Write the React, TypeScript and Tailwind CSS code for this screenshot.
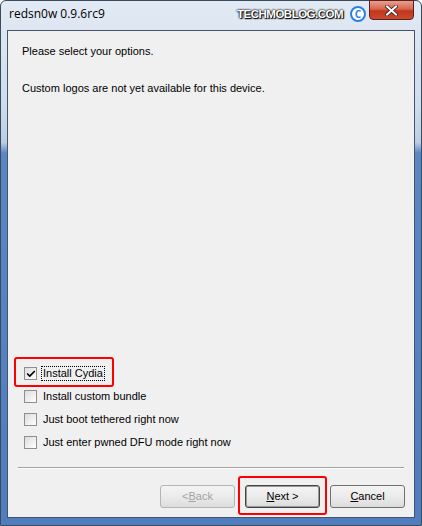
import { Check } from 'lucide-react';

const ui = { fontFamily: '"Liberation Sans", Arial, sans-serif' };
const titleFont = { fontFamily: '"Open Sans", "Noto Sans", sans-serif' };

function Option({ label, checked, focused }: { label: string; checked?: boolean; focused?: boolean }) {
  return (
    <div className="flex h-[23px] items-center gap-[4px]">
      <span className="flex h-[13px] w-[13px] items-center justify-center border border-[#8f8f8f] bg-gradient-to-br from-[#dcdcdc] to-white">
        {checked && <Check className="h-[10px] w-[10px] text-black" strokeWidth={4} />}
      </span>
      <span className={focused ? 'border border-dotted border-black px-[1px] leading-[13px]' : 'px-[2px]'}>{label}</span>
    </div>
  );
}

function WinButton({ children, disabled, primary }: { children: React.ReactNode; disabled?: boolean; primary?: boolean }) {
  return (
    <div
      className={
        'flex h-[23px] w-[75px] items-center justify-center rounded-[3px] border bg-gradient-to-b from-[#f4f4f4] via-[#ebebeb] to-[#dcdcdc] ' +
        (disabled
          ? 'border-[#b5b5b5] text-[#a3a3a3]'
          : primary
            ? 'border-[#444] shadow-[inset_0_0_0_1px_#9a9a9a] text-black'
            : 'border-[#707070] text-black')
      }
    >
      {children}
    </div>
  );
}

export default function App() {
  return (
    <div className="h-[526px] w-[422px] overflow-hidden bg-white">
      <div className="flex h-full w-full flex-col rounded-t-[6px] border border-[#3b4b5e] bg-[linear-gradient(180deg,#e2eaf4_0%,#cfdcec_20%,#bccde4_27%,#5a86c4_29%,#4f7dbd_100%)]">
        {/* title bar */}
        <div className="relative flex h-[29px] items-center pl-[8px] text-[12px] text-black" style={titleFont}>
          <span className="-mt-[3px]">redsn0w 0.9.6rc9</span>
          <span
            className="absolute left-[236px] top-[5px] text-[11.5px] font-bold tracking-[-0.5px] text-white"
            style={{ fontFamily: '"Liberation Sans", Arial, sans-serif', textShadow: '0 0 2px #000, 0 0 2px #000, 1px 1px 1px #000' }}
          >
            TECHMOBLOG.COM
          </span>
          <span className="absolute left-[349px] top-[5px] flex h-[16px] w-[16px] items-center justify-center rounded-full border-2 border-[#2a7fe0] bg-white text-[10px] font-bold leading-none text-[#2a7fe0]">
            C
          </span>
          <div className="absolute right-[7px] top-[-1px] flex h-[20px] w-[45px] items-center justify-center rounded-b-[4px] border border-[#5a2020] bg-[linear-gradient(180deg,#e9a08e_0%,#d6654f_45%,#c2361c_55%,#c94a30_100%)]">
            <svg width="13" height="11" viewBox="0 0 13 11">
              <path d="M2 1.5 L11 9.5 M11 1.5 L2 9.5" stroke="#3a2020" strokeWidth="3.6" strokeLinecap="square" />
              <path d="M2 1.5 L11 9.5 M11 1.5 L2 9.5" stroke="#ffffff" strokeWidth="2" strokeLinecap="square" />
            </svg>
          </div>
        </div>

        {/* client area */}
        <div className="mx-[6px] mb-[7px] flex flex-1 flex-col border border-[#44546a] bg-[#f0f0f0] text-[11px] text-black" style={ui}>
          <div className="flex flex-1 flex-col px-[14px] pt-[14px]">
            <p className="leading-[13px]">Please select your options.</p>
            <p className="mt-[24px] leading-[13px]">Custom logos are not yet available for this device.</p>

            <div className="mt-auto mb-[13px] flex flex-col pl-[2px]">
              <div className="relative">
                <div className="pointer-events-none absolute -left-[10px] -top-[5px] h-[30px] w-[100px] rounded-[3px] border-2 border-[#f00]" />
                <Option label="Install Cydia" checked focused />
              </div>
              <Option label="Install custom bundle" />
              <Option label="Just boot tethered right now" />
              <Option label="Just enter pwned DFU mode right now" />
            </div>
          </div>

          <div className="mx-[10px] border-t border-b border-t-[#a0a0a0] border-b-white" />

          <div className="flex items-center justify-end gap-[10px] px-[9px] pb-[9px] pt-[16px]">
            <WinButton disabled>
              &lt; <u>B</u>ack
            </WinButton>
            <div className="relative">
              <div className="pointer-events-none absolute -left-[7px] -top-[9px] h-[39px] w-[89px] rounded-[3px] border-2 border-[#f00]" />
              <WinButton primary>
                <u>N</u>ext &gt;
              </WinButton>
            </div>
            <WinButton>
              <u>C</u>ancel
            </WinButton>
          </div>
        </div>
      </div>
    </div>
  );
}
